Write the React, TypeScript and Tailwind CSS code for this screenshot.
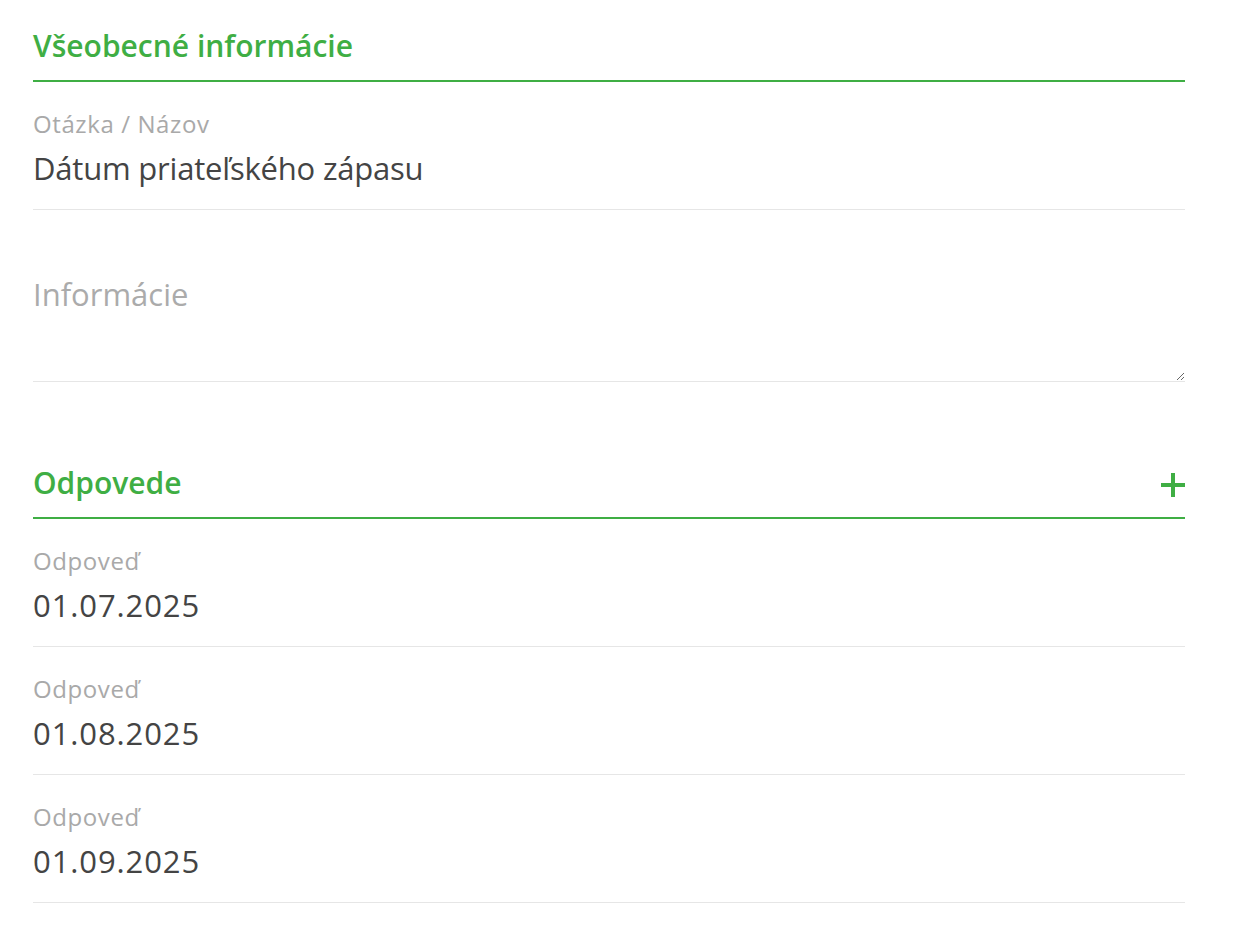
import React from "react";

const font = { fontFamily: '"Open Sans", "Noto Sans", sans-serif' };

function Heading({ title, plus }: { title: string; plus?: boolean }) {
  return (
    <div className="flex items-center justify-between border-b-2 border-[#3fae44] pt-[28px] pb-[16px]">
      <h2 className="text-[30px] leading-[36px] font-semibold text-[#3fae44]">{title}</h2>
      {plus && (
        <svg width="26" height="26" viewBox="0 0 26 26" className="mr-[-1px] mt-[4px]">
          <rect x="11" y="1" width="4" height="24" fill="#3fae44" />
          <rect x="1" y="11" width="24" height="4" fill="#3fae44" />
        </svg>
      )}
    </div>
  );
}

function Field({ label, value, date }: { label: string; value: string; date?: boolean }) {
  return (
    <div className="border-b border-[#e6e6e6] pt-[27px] pb-[22px]">
      <div className="text-[24px] leading-[30px] text-[#a9a9a9] tracking-[0.6px]">{label}</div>
      <div
        className={
          date
            ? "mt-[10px] text-[31px] leading-[38px] text-[#444444] tracking-[0.9px]"
            : "mt-[10px] text-[31px] leading-[38px] text-[#444444] tracking-[-0.2px]"
        }
      >
        {value}
      </div>
    </div>
  );
}

export default function App() {
  return (
    <div className="min-h-[946px] bg-white" style={font}>
      <div className="ml-[33px] w-[1152px]">
        <Heading title="Všeobecné informácie" />
        <Field label="Otázka / Názov" value="Dátum priateľského zápasu" />
        <div className="border-b border-[#e6e6e6]">
          <textarea
            placeholder="Informácie"
            className="block w-full h-[171px] pt-[65px] text-[31px] leading-[38px] text-[#444444] placeholder:text-[#ababab] outline-none resize-y"
            style={font}
          />
        </div>
        <div className="mt-[55px]">
          <Heading title="Odpovede" plus />
        </div>
        <Field label="Odpoveď" value="01.07.2025" date />
        <Field label="Odpoveď" value="01.08.2025" date />
        <Field label="Odpoveď" value="01.09.2025" date />
      </div>
    </div>
  );
}
